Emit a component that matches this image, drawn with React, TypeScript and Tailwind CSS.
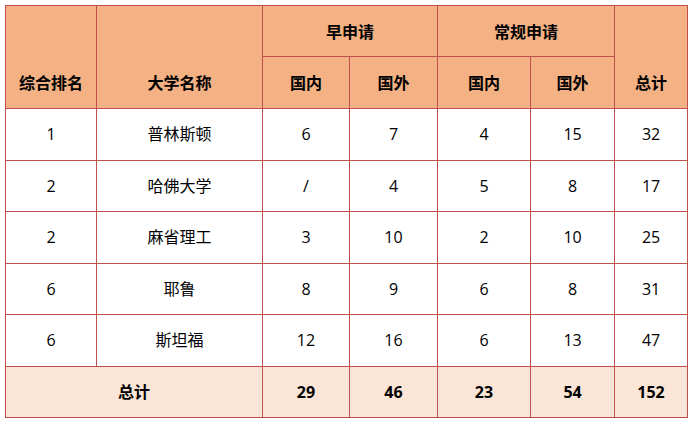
import React from "react";

const rows = [
  ["1", "普林斯顿", "6", "7", "4", "15", "32"],
  ["2", "哈佛大学", "/", "4", "5", "8", "17"],
  ["2", "麻省理工", "3", "10", "2", "10", "25"],
  ["6", "耶鲁", "8", "9", "6", "8", "31"],
  ["6", "斯坦福", "12", "16", "6", "13", "47"],
];

export default function App() {
  const cell = "border border-[#C0504D] text-center p-0";
  return (
    <div className="bg-white w-[694px] h-[424px] pl-[5px] pt-[5px]" style={{ fontFamily: '"Open Sans", "Noto Sans CJK SC", sans-serif' }}>
      <table className="border-collapse text-[16px] leading-[24px] text-black table-fixed w-[682px]">
        <colgroup>
          <col className="w-[91px]" />
          <col className="w-[166px]" />
          <col className="w-[87px]" />
          <col className="w-[88px]" />
          <col className="w-[93px]" />
          <col className="w-[84px]" />
          <col className="w-[73px]" />
        </colgroup>
        <thead>
          <tr className="h-[51px] bg-[#F4B183] font-bold">
            <th rowSpan={2} className={`${cell} align-bottom pb-[13px]`}>综合排名</th>
            <th rowSpan={2} className={`${cell} align-bottom pb-[13px]`}>大学名称</th>
            <th colSpan={2} className={`${cell} pt-[2px]`}>早申请</th>
            <th colSpan={2} className={`${cell} pt-[2px]`}>常规申请</th>
            <th rowSpan={2} className={`${cell} align-bottom pb-[13px]`}>总计</th>
          </tr>
          <tr className="h-[52px] bg-[#F4B183] font-bold">
            <th className={cell}>国内</th>
            <th className={cell}>国外</th>
            <th className={cell}>国内</th>
            <th className={cell}>国外</th>
          </tr>
        </thead>
        <tbody>
          {rows.map((r, i) => (
            <tr key={i} className="h-[51.5px]">
              {r.map((c, j) => (
                <td key={j} className={cell}>{c}</td>
              ))}
            </tr>
          ))}
          <tr className="h-[51.5px] bg-[#FBE5D6] font-bold">
            <td colSpan={2} className={cell}>总计</td>
            <td className={cell}>29</td>
            <td className={cell}>46</td>
            <td className={cell}>23</td>
            <td className={cell}>54</td>
            <td className={cell}>152</td>
          </tr>
        </tbody>
      </table>
    </div>
  );
}
